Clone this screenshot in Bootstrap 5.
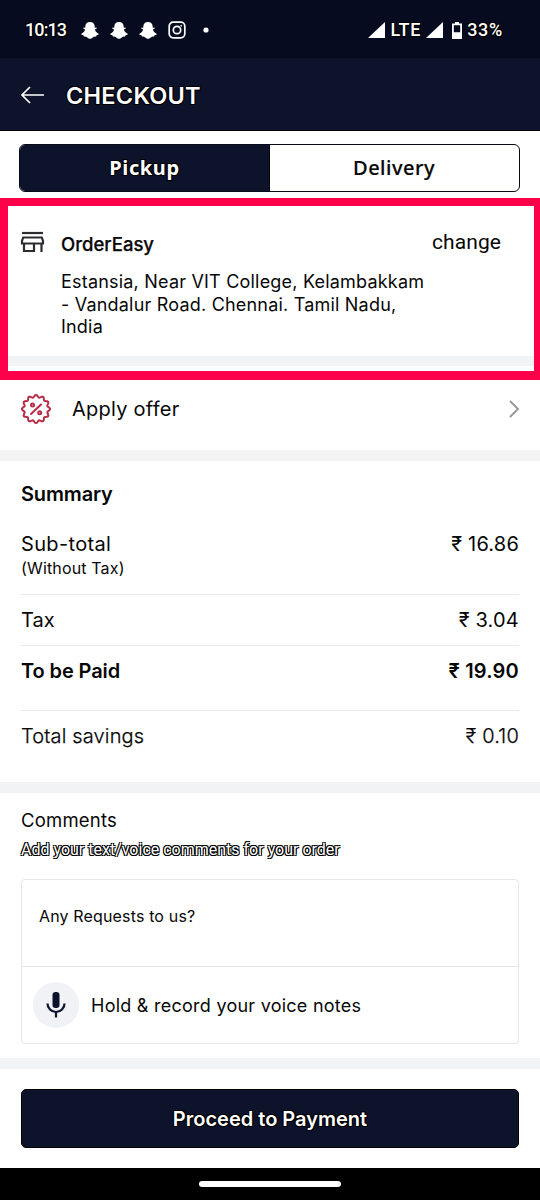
<!DOCTYPE html>
<html lang="en">
<head>
<meta charset="utf-8">
<meta name="viewport" content="width=device-width, initial-scale=1">
<title>Checkout</title>
<link href="https://cdn.jsdelivr.net/npm/bootstrap@5.3.0/dist/css/bootstrap.min.css" rel="stylesheet">
<style>
:root{--navy:#0c132b;--band:#f1f3f5}
body{font-family:Inter,"Noto Sans",sans-serif;color:#070707;background:#fff;line-height:24px;font-size:20px}
.screen{width:540px;height:1200px;overflow:hidden}
.screen svg{display:block;flex:none}
.statusbar{height:58px;background:#060b1f;padding:2px 37px 0 25px;font:500 18px/24px Roboto,sans-serif}
.clock{width:56px;letter-spacing:-.9px}
.signals{letter-spacing:.7px}
.apphead{height:73px;background:var(--navy);border-bottom:1px solid #000;padding:2px 0 0 20px}
.apphead h1{font-size:23.5px;line-height:30px;font-weight:600;margin:2px 0 0 20px;letter-spacing:.25px}
.outlined{text-shadow:1px 1px 0 #000,-1px 1px 0 #000,1px -1px 0 #000,-1px -1px 0 #000}
.modes{height:67px;padding:13px 20px 6px 19px}
.modes .btn-group{height:48px;border:1px solid #080a18;border-radius:6px;overflow:hidden}
.modes .btn{border:0;border-radius:0;font:500 20px/24px "Noto Sans",sans-serif;color:#080808;padding:0;letter-spacing:.5px;-webkit-text-stroke:.2px #080808}
.modes .btn.active{background:var(--navy);color:#fff;border-right:1px solid #000;font-weight:700;letter-spacing:.6px;-webkit-text-stroke:0}
.store{height:182px;border:8px solid #ff004b;border-right-width:6px;border-bottom-width:9px}
.store-body{height:150px;padding:25px 33px 0 12px}
.store-name{font-size:18.5px;font-weight:500;line-height:24px;-webkit-text-stroke:.25px #070707;padding-top:1px}
.address{font-size:18px;line-height:22.5px;letter-spacing:.2px;width:385px}
.change{font:400 21px/24px Roboto,sans-serif;letter-spacing:.1px}
.store-band{height:10px;background:var(--band)}
.offer{height:70px;padding:0 20px 13px 20px}
.band{height:11px;background:var(--band)}
.inset{padding:0 21px}
.rule{height:1px;background:#e9e9ea}
.summary{height:321px}
.sum-row{display:flex;justify-content:space-between}
.sum-row span:last-child{letter-spacing:.2px}
.savings{font-weight:300;-webkit-text-stroke:.25px #070707}
.summary h2{font-size:20px;line-height:24px;font-weight:600;margin:0;letter-spacing:-.15px}
.comments{height:265px}
.hint{font:400 16px/20px Roboto,sans-serif;color:#fff;letter-spacing:0}
.request{height:165px;border:1px solid #e7e7e8;border-radius:4px}
.request-text{height:87px;border-bottom:1px solid #e7e7e8;padding:24px 17px;font-size:16px;letter-spacing:.15px}
.mic{width:46px;height:46px;background:#f1f2f5}
.pay{height:59px;background:var(--navy);border:1px solid #000;border-radius:5px;color:#fff;font-size:20px;font-weight:600}
.pay:hover{background:var(--navy);color:#fff}
.navpill{width:142px;height:6px;border-radius:3px;background:#fff}
</style>
</head>
<body>
<svg width="0" height="0" class="position-absolute"><defs>
<symbol id="ghost" viewBox="0 0 18 17"><path d="M9 0C6 0 4.300 2 4.300 4.600v1.100L2.500 5.400l-.3 1 1.900 1.200C3.600 9.700 2.200 11 .3 11.800c-.3 1 1 1.300 2.100 1.500l.6 1.400c1.200-.2 2.200-.1 3.200.7C7.200 16.200 8 16.700 9 16.700s1.800-.5 2.800-1.300c1-.8 2-.9 3.200-.7l.6-1.400c1.100-.2 2.400-.5 2.100-1.500-1.900-.8-3.300-2.100-3.800-4.200l1.900-1.200-.3-1-1.800.3V4.600C13.700 2 12 0 9 0z" fill="#fff"/></symbol>
</defs></svg>
<main class="screen d-flex flex-column">
  <div class="statusbar d-flex align-items-center text-white outlined">
    <span class="clock">10:13</span>
    <svg width="18" height="17"><use href="#ghost" width="18" height="17"/></svg>
    <svg style="margin-left:11px" width="18" height="17"><use href="#ghost" width="18" height="17"/></svg>
    <svg style="margin-left:11px" width="18" height="17"><use href="#ghost" width="18" height="17"/></svg>
    <svg style="margin-left:11px" width="18" height="18" viewBox="0 0 18 18" fill="none" stroke="#fff" stroke-width="1.700"><rect x="1.200" y="1.200" width="15.600" height="15.600" rx="4"/><circle cx="9" cy="9" r="3.700"/><circle cx="13.200" cy="4.800" r=".6" fill="#fff" stroke-width=".6"/></svg>
    <svg style="margin-left:17px" width="6" height="6"><circle cx="3" cy="3" r="2.600" fill="#fff"/></svg>
    <div class="signals d-flex align-items-center ms-auto">
      <svg width="17" height="16"><path d="M0 16 17 0v16z" fill="#fff"/></svg>
      <span style="margin-left:5px">LTE</span>
      <svg style="margin-left:5px" width="17" height="16"><path d="M0 16 17 0v16z" fill="#fff"/></svg>
      <svg style="margin:0 5px 0 9px" width="10" height="17" viewBox="0 0 10 17"><path d="M3 0h4v1.500h3V17H0V1.500h3zM1.800 3.300v7h6.400v-7z" fill="#fff" fill-rule="evenodd"/></svg>
      <span>33%</span>
    </div>
  </div>
  <header class="apphead d-flex align-items-center text-white">
    <svg width="25" height="20" viewBox="0 0 25 20" fill="none" stroke="#fff" stroke-width="1.700"><path d="M24 10H2M10 2 2 10l8 8"/></svg>
    <h1 class="outlined" style="margin-left:21px">CHECKOUT</h1>
  </header>
  <div class="modes">
    <div class="btn-group w-100 d-flex">
      <button class="btn active w-50 outlined">Pickup</button>
      <button class="btn w-50">Delivery</button>
    </div>
  </div>
  <section class="store">
    <div class="store-body d-flex align-items-start">
      <svg width="25" height="22" viewBox="0 0 25 22" fill="none" stroke="#2b2c30" stroke-width="2.200"><path d="M2 2h21"/><path d="M3.200 6.500h18.600l1.200 3.500v2.500H2V10zM4 12.500V20h10v-7.500M21.500 12.500V21"/></svg>
      <div style="margin-left:16px"><div class="store-name">OrderEasy</div><div class="address" style="margin-top:15px">Estansia, Near VIT College, Kelambakkam<br>- Vandalur Road. Chennai. Tamil Nadu,<br>India</div></div>
      <div class="change" style="margin:-1px 0 0 -14px">change</div>
    </div>
    <div class="store-band"></div>
  </section>
  <section class="offer d-flex align-items-center">
    <svg width="32" height="32" viewBox="-16 -16 32 32" fill="none" stroke="#b72d48" stroke-width="2" stroke-linecap="round" stroke-linejoin="round"><path id="seal"/><path d="M5-4.500-5 5"/><circle cx="-3.500" cy="-4" r="1.500"/><circle cx="3.700" cy="3.700" r="1.500"/></svg>
    <span style="margin-left:20px;letter-spacing:.25px">Apply offer</span>
    <svg class="ms-auto" width="12" height="18" viewBox="0 0 12 18" fill="none" stroke="#999" stroke-width="1.900"><path d="m2 1 8 8-8 8"/></svg>
  </section>
  <div class="band" style="background:#f4f4f5"></div>
  <section class="summary inset">
    <h2 style="padding-top:21px">Summary</h2>
    <div class="sum-row" style="padding-top:26px"><span style="letter-spacing:.35px">Sub-total</span><span>₹ 16.86</span></div>
    <div style="font-size:16px;height:38px;letter-spacing:.15px">(Without Tax)</div>
    <div class="rule"></div>
    <div class="sum-row" style="height:50px;padding-top:13px"><span>Tax</span><span>₹ 3.04</span></div>
    <div class="rule"></div>
    <div class="sum-row fw-semibold" style="height:64px;padding-top:13px"><span style="letter-spacing:-.1px">To be Paid</span><span>₹ 19.90</span></div>
    <div class="rule"></div>
    <div class="sum-row savings" style="padding-top:13px"><span style="letter-spacing:.15px">Total savings</span><span>₹ 0.10</span></div>
  </section>
  <div class="band"></div>
  <section class="comments inset">
    <div style="padding-top:15px;font-size:18.500px;letter-spacing:.2px">Comments</div>
    <div class="hint outlined" style="margin:8px 0 19px">Add your text/voice comments for your order</div>
    <div class="request">
      <div class="request-text">Any Requests to us?</div>
      <div class="d-flex align-items-center" style="height:76px;padding-left:11px">
        <div class="mic rounded-circle d-flex align-items-center justify-content-center"><svg width="20" height="26" viewBox="0 0 20 26"><rect x="6.500" y="0" width="7" height="16" rx="3" fill="#0c132b"/><path d="M1.500 11.500a8.500 8.500 0 0 0 17 0M10 20v5.500" fill="none" stroke="#0c132b" stroke-width="2.200"/></svg></div>
        <span style="margin-left:12px;padding-top:2px;font-size:18px;letter-spacing:.25px">Hold &amp; record your voice notes</span>
      </div>
    </div>
  </section>
  <div class="band"></div>
  <footer class="inset" style="height:99px;padding-top:20px"><button class="btn pay w-100 outlined">Proceed to Payment</button></footer>
  <div class="bg-black d-flex justify-content-center align-items-center" style="height:32px"><div class="navpill"></div></div>
</main>
<script src="https://cdn.jsdelivr.net/npm/bootstrap@5.3.0/dist/js/bootstrap.bundle.min.js"></script>
<script>
// Twelve-lobed outline of the offer seal
let outline = "";
for (let i = 0; i <= 144; i++) {
  const a = i * Math.PI / 72, r = 12.9 + 1.15 * Math.cos(12 * a);
  outline += (i ? "L" : "M") + (r * Math.sin(a)).toFixed(2) + " " + (-r * Math.cos(a)).toFixed(2);
}
document.getElementById("seal").setAttribute("d", outline + "Z");
</script>
</body>
</html>
